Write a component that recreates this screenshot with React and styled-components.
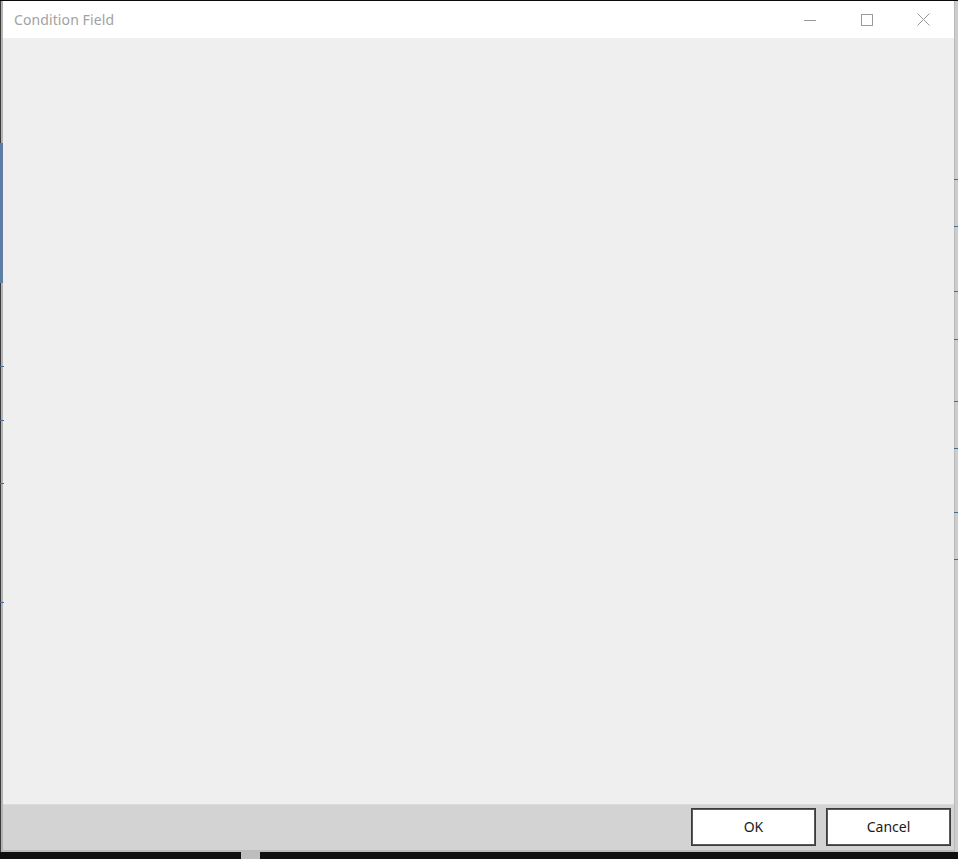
import React from 'react';
import styled, { createGlobalStyle } from 'styled-components';

const GlobalStyle = createGlobalStyle`
    html, body {
        margin: 0;
        padding: 0;
        background: #0f0f0f;
    }
    body {
        font-family: "Noto Sans", "Liberation Sans", sans-serif;
    }
`;

const rightTicks = [178, 225, 290, 338, 400, 447, 511, 558];
const leftTicks = [365, 419, 482, 601];

function App() {
    return (
        <>
            <GlobalStyle />
            <Screen>
                <Desk>
                    <LeftEdge>
                        <BlueStrip />
                        {leftTicks.map((t) => (
                            <Tick key={t} style={{ top: t }} />
                        ))}
                    </LeftEdge>

                    <Window>
                        <TitleBar>
                            <Title>Condition Field</Title>
                            <Controls>
                                <ControlButton aria-label="Minimize">
                                    <svg width="12" height="12" viewBox="0 0 12 12">
                                        <path d="M0 6.5h12" stroke="#9a9a9a" strokeWidth="1" />
                                    </svg>
                                </ControlButton>
                                <ControlButton aria-label="Maximize">
                                    <svg width="12" height="12" viewBox="0 0 12 12">
                                        <rect x="0.5" y="0.5" width="11" height="11" fill="none" stroke="#9a9a9a" strokeWidth="1" />
                                    </svg>
                                </ControlButton>
                                <ControlButton aria-label="Close">
                                    <svg width="13" height="13" viewBox="0 0 13 13">
                                        <path d="M0.5 0.5l12 12M12.5 0.5l-12 12" stroke="#9a9a9a" strokeWidth="1" />
                                    </svg>
                                </ControlButton>
                            </Controls>
                        </TitleBar>

                        <Body />

                        <Footer>
                            <DialogButton>OK</DialogButton>
                            <DialogButton>Cancel</DialogButton>
                        </Footer>
                    </Window>

                    <RightEdge>
                        {rightTicks.map((t) => (
                            <Tick key={t} style={{ top: t }} />
                        ))}
                    </RightEdge>
                </Desk>
                <BottomStrip>
                    <Tab />
                </BottomStrip>
            </Screen>
        </>
    );
}

export default App;

const Screen = styled.div`
    width: 958px;
    height: 859px;
    display: flex;
    flex-direction: column;
    background: #0f0f0f;
    overflow: hidden;
`;

const Desk = styled.div`
    display: flex;
    height: 852px;
    border-top: 1px solid #0a0a0a;
    box-sizing: border-box;
`;

const LeftEdge = styled.div`
    position: relative;
    width: 3px;
    background: linear-gradient(to right, #3a3a3a 0 1px, #b4b4b4 1px 3px);
`;

const BlueStrip = styled.div`
    position: absolute;
    left: 0;
    top: 142px;
    width: 3px;
    height: 140px;
    background: #5e7ea6;
`;

const Tick = styled.span`
    position: absolute;
    left: 0;
    width: 4px;
    height: 1px;
    background: #4a6a9a;
`;

const RightEdge = styled.div`
    position: relative;
    width: 4px;
    background: linear-gradient(to right, #b9b9b9 0 1px, #cdcdcd 1px 4px);
`;

const Window = styled.div`
    flex: 1;
    display: flex;
    flex-direction: column;
    background: #efefef;
    border-bottom: 2px solid #bcbcbc;
`;

const TitleBar = styled.div`
    height: 37px;
    display: flex;
    align-items: center;
    justify-content: space-between;
    background: #ffffff;
    flex-shrink: 0;
`;

const Title = styled.span`
    padding-left: 11px;
    font-size: 14px;
    color: #a2a2a2;
    letter-spacing: 0.1px;
`;

const Controls = styled.div`
    display: flex;
    height: 100%;
    padding-right: 2px;
`;

const ControlButton = styled.div`
    width: 57px;
    height: 100%;
    display: flex;
    align-items: center;
    justify-content: center;
`;

const Body = styled.div`
    flex: 1;
    background: #efefef;
`;

const Footer = styled.div`
    height: 46px;
    display: flex;
    align-items: flex-start;
    justify-content: flex-end;
    gap: 10px;
    padding: 3px 3px 0 0;
    box-sizing: border-box;
    background: #d3d3d3;
    border-top: 1px solid #dadada;
    flex-shrink: 0;
`;

const DialogButton = styled.button`
    width: 125px;
    height: 38px;
    background: #ffffff;
    border: 1px solid #3b3b3b;
    box-shadow: inset 0 0 0 1px #5a5a5a;
    font-family: "Noto Sans", "Liberation Sans", sans-serif;
    font-size: 14px;
    line-height: 1;
    color: #1a1a1a;
    padding: 0 0 1px;
`;

const BottomStrip = styled.div`
    flex: 1;
    position: relative;
    background: #0f0f0f;
`;

const Tab = styled.div`
    position: absolute;
    left: 241px;
    top: 0;
    width: 19px;
    height: 100%;
    background: #bdbdbd;
`;
